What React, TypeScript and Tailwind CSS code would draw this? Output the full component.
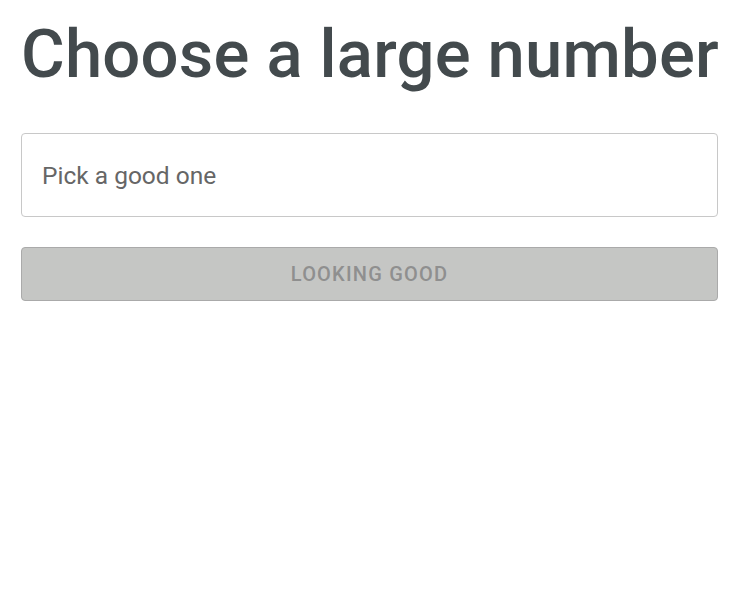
import React from 'react';

const App: React.FC = () => {
  return (
    <div className="min-h-screen bg-white pl-[21px] pt-[14px]" style={{ fontFamily: 'Roboto, sans-serif' }}>
      <div className="w-[697px]">
        <h1 className="whitespace-nowrap text-[67px] leading-[80px] font-medium tracking-[0.2px] text-[#434a4d]">Choose a large number</h1>
        <input
          type="text"
          placeholder="Pick a good one"
          className="mt-[39px] block w-full h-[84px] rounded-[4px] border border-[#c8c8c8] px-5 text-[24.5px] text-[#444] placeholder:text-[#666] outline-none"
        />
        <button
          disabled
          className="mt-[30px] block w-full h-[54px] rounded-[4px] border border-[#aaaaaa] bg-[#c5c6c4] text-[20px] font-medium tracking-[0.06em] text-[#8f8f8f]"
        >
          LOOKING GOOD
        </button>
      </div>
    </div>
  );
};

export default App;
